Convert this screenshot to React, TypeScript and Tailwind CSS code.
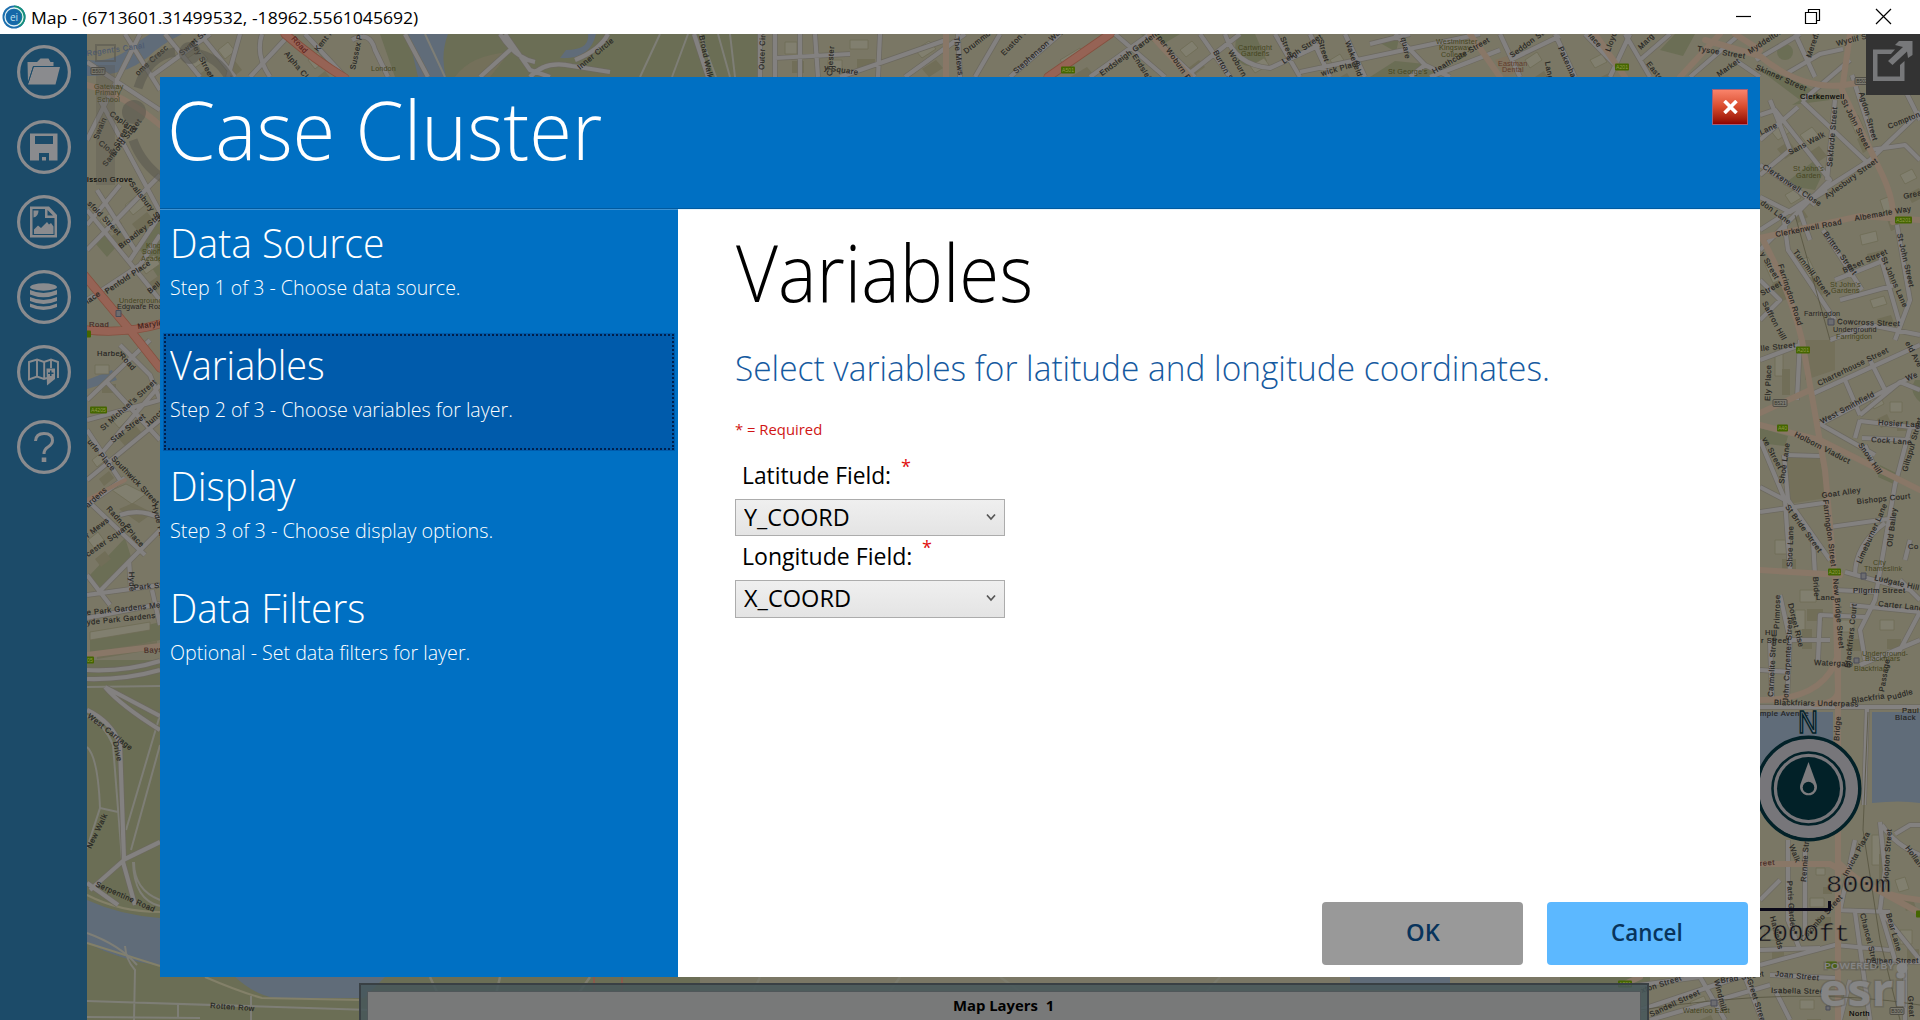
import React, { useLayoutEffect, useRef, useState } from "react";

/* Single line of text condensed or widened to a given width. */
function Fit({ w, className = "", children }: { w: number; className?: string; children: React.ReactNode }) {
  const ref = useRef<HTMLSpanElement>(null);
  const [scale, setScale] = useState(1);
  useLayoutEffect(() => {
    if (ref.current) setScale(w / ref.current.offsetWidth);
  }, [w]);
  return (
    <span
      ref={ref}
      className={"block w-max origin-left whitespace-nowrap " + className}
      style={{ transform: `scaleX(${scale})` }}
    >
      {children}
    </span>
  );
}

type Label = [string, number, number, number, string?];

const streets: Label[] = [
  // west strip
  ["Regent's Canal", 87, 56, -8, "#4d5a70"],
  ["isson Grove", 87, 182, 0, "#000"],
  ["ome Cresc", 138, 76, -42],
  ["Capland", 109, 115, 35],
  ["Street", 118, 148, -62],
  ["Samford Street", 106, 167, -52],
  ["Close", 98, 144, 38],
  ["Swain", 98, 140, -68],
  ["Salisbury Street", 129, 184, 52],
  ["sfold Street", 87, 204, 46],
  ["Broadley Street", 121, 249, -38],
  ["Penfold Place", 107, 294, -34],
  ["lace", 88, 304, -35],
  ["Bell S", 150, 294, -40],
  ["Road", 89, 327, 0, "#472a25"],
  ["Maryleb", 138, 329, -9, "#3c1d18"],
  ["Harbet", 97, 356, 0],
  ["Road", 119, 356, 48],
  ["St Michael's Street", 103, 431, -42],
  ["Star Street", 113, 443, -38],
  ["Juncti", 148, 427, -42],
  ["Southwick Street", 111, 459, 46],
  ["urle Place", 87, 442, 50],
  ["Radnor Place", 106, 509, 48],
  ["Hyde Park", 152, 505, 76],
  ["ardens", 88, 508, -42],
  ["r Mews", 88, 538, -38],
  ["cester Square", 88, 557, -35],
  ["Hyde", 129, 572, 88],
  ["Park St", 134, 590, -5],
  ["e Park Gardens Mews", 87, 615, -6],
  ["yde Park Gardens", 87, 625, -6],
  ["Bays", 144, 653, -3, "#472a25"],
  ["West Carriage", 87, 717, 38],
  ["Drive", 113, 742, 78],
  ["New Walk", 91, 849, -64],
  ["Serpentine Road", 95, 886, 24],
  // north strip
  ["Swart Street", 182, 56, -42],
  ["eley Street", 190, 42, 62],
  ["Alpha Close", 284, 54, 50],
  ["Road", 291, 39, 48, "#5a211a"],
  ["Kent Pas", 318, 52, -52],
  ["Sussex Place", 355, 70, -78],
  ["Inner Circle", 580, 70, -40],
  ["Outer Circle", 764, 70, -88],
  ["Broad Walk", 699, 36, 78],
  ["Chester", 832, 76, -86],
  ["y Square", 824, 70, 8],
  ["The Mews", 954, 37, 84],
  ["Drummond", 966, 54, -38],
  ["Euston Street", 1004, 56, -45],
  ["Stephenson Way", 1016, 74, -42],
  ["Endsleigh Gardens", 1102, 76, -36],
  ["Endsleigh", 1132, 56, 58],
  ["per Woburn Place", 1157, 38, 55],
  ["Burton Street", 1213, 52, 62],
  ["Woburn", 1228, 52, 60],
  ["Leigh Street", 1284, 64, -34],
  ["Street", 1280, 38, 66],
  ["Wakefield Street", 1345, 42, 70],
  ["Street", 1318, 40, 74],
  ["quare", 1401, 38, 78],
  ["wick Place", 1322, 76, -16],
  ["Heathcote Street", 1434, 74, -30],
  ["Seddon Street", 1512, 58, -36],
  ["Pakenham", 1558, 48, 66],
  ["Langton", 1545, 62, 80],
  ["Lloyd", 1610, 52, -70],
  ["lace", 1588, 36, 50],
  ["Marg", 1641, 50, -45],
  ["Easton", 1646, 64, 52],
  ["Tysoe Street", 1697, 51, 9],
  ["Market", 1719, 77, -35],
  ["Myddelton", 1750, 54, -33],
  // east strip
  ["Meredith", 1811, 58, -72],
  ["Wyclif Str", 1837, 46, -14],
  ["Skinner Street", 1755, 69, 24],
  ["Clerkenwell", 1800, 99, 0, "#000"],
  ["St John Street", 1841, 101, 63],
  ["Agdon Street", 1859, 93, 74],
  ["Compton", 1889, 129, -22],
  ["Sekforde Street", 1832, 167, -85],
  ["Lane", 1761, 135, -25],
  ["Sans Walk", 1790, 155, -28],
  ["Clerkenwell Close", 1762, 168, 34],
  ["Aylesbury Street", 1827, 199, -36],
  ["Great", 1904, 199, -12],
  ["Clerkenwell Road", 1776, 237, -11],
  ["Albemarle Way", 1855, 221, -10],
  ["don Lane", 1760, 204, 36],
  ["St John Street", 1897, 234, 77],
  ["Britton Street", 1823, 234, 54],
  ["Turnmill Street", 1793, 252, 53],
  ["Briset Street", 1844, 273, -24],
  ["St Johns Lane", 1881, 258, 66],
  ["Farringdon Road", 1778, 265, 72],
  ["y Street", 1760, 254, 60],
  ["Saffron Hill", 1762, 303, 62],
  ["Street", 1762, 296, -28],
  ["Cowcross Street", 1837, 324, 2],
  ["lle Street", 1761, 351, -6],
  ["Ely Place", 1770, 401, -88],
  ["Charterhouse Street", 1819, 386, -26],
  ["West Smithfield", 1822, 424, -28],
  ["eld Ave", 1905, 343, 62],
  ["We", 1907, 381, -22],
  ["Hosier Lane", 1878, 425, 3],
  ["Cock Lane", 1871, 442, 4],
  ["Snow Hill", 1858, 445, 56],
  ["Giltspur Street", 1907, 472, -74],
  ["Holborn Viaduct", 1794, 436, 27],
  ["ve Street", 1762, 439, 62],
  ["Shoe Lane", 1784, 484, -82],
  ["Goat Alley", 1822, 498, -8],
  ["Bishops Court", 1857, 504, -6],
  ["St Bride Street", 1785, 507, 54],
  ["Farringdon Street", 1823, 500, 83],
  ["Limeburner Lane", 1861, 564, -66],
  ["Old Bailey", 1892, 547, -83],
  ["Shoe Lane", 1792, 567, -88],
  ["Co", 1908, 549, 0],
  ["Ludgate Hill", 1874, 580, 13],
  ["Pilgrim Street", 1853, 593, 0],
  ["Carter Lane", 1878, 606, 6],
  ["New Bridge Street", 1833, 579, 85],
  ["Bride", 1813, 577, 86],
  ["Lane", 1816, 600, 0],
  ["Dorset Rise", 1788, 604, 76],
  ["Primrose", 1779, 629, -88],
  ["Hill", 1765, 635, 0],
  ["r Street", 1761, 643, 0],
  ["Blackfriars Court", 1850, 668, -84],
  ["Watergate", 1814, 665, 2],
  ["Carmelite Street", 1773, 697, -87],
  ["John Carpenter Street", 1788, 702, -87],
  ["Passage", 1884, 692, -80],
  ["Puddle", 1888, 701, -16],
  ["Blackfriars Underpass", 1774, 705, 1],
  ["Blackfria", 1852, 703, -8],
  ["mple Avenue", 1760, 716, 0],
  ["Paul", 1902, 713, 0],
  ["Black", 1895, 720, 0],
  ["Bridge", 1839, 741, -86],
  ["Walk", 1789, 846, 68],
  ["Rennie Street", 1806, 882, -86],
  ["Invicta Plaza", 1847, 877, -62],
  ["reet", 1760, 866, -5, "#472a25"],
  ["Paris Garden", 1787, 881, 86],
  ["Colombo Street", 1803, 942, -48],
  ["Hatfields", 1770, 917, 76],
  ["Chancel Street", 1860, 914, 76],
  ["Bear Lane", 1886, 914, 74],
  ["Hopton Street", 1888, 882, -86],
  ["Hollan", 1905, 848, 54],
  ["Dolben Street", 1866, 964, -1],
  ["Joan Street", 1775, 976, 6],
  ["Isabella Street", 1771, 993, 1],
  ["Brad Street", 1721, 983, -9],
  ["Windmill", 1714, 980, 76],
  ["Greet Street", 1747, 980, 72],
  ["xton Street", 1642, 993, -18],
  ["Sandell Street", 1651, 1017, -25],
  ["North", 1849, 1016, 0, "#000"],
  ["Great", 1908, 996, 86],
  ["Rotten Row", 210, 1008, 4],
];

const places: Label[] = [
  ["Gateway", 94, 89, 0],
  ["Primary", 95, 95, 0],
  ["School", 97, 102, 0],
  ["King", 146, 248, 0],
  ["Solom", 142, 254, 0],
  ["Acade", 141, 261, 0],
  ["Underground", 119, 303, 0],
  ["Edgware Road", 117, 309, 0, "#24231f"],
  ["London", 371, 71, 0],
  ["Cartwright", 1238, 50, 0],
  ["Gardens", 1241, 56, 0],
  ["Westminster", 1436, 44, 0],
  ["Kingsway", 1439, 50, 0],
  ["College", 1441, 57, 0],
  ["St George's", 1388, 74, 0],
  ["Eastman", 1498, 66, 0, "#5f3a2c"],
  ["Dental", 1502, 72, 0, "#5f3a2c"],
  ["St John's", 1793, 171, 0],
  ["Garden", 1796, 178, 0],
  ["St John's", 1830, 287, 0],
  ["Gardens", 1831, 293, 0],
  ["Farringdon", 1804, 316, 0, "#24231f"],
  ["Underground", 1833, 332, 0, "#24231f"],
  ["Farringdon", 1836, 339, 0],
  ["City", 1873, 565, 0],
  ["Thameslink", 1864, 571, 0],
  ["Underground-", 1862, 656, 0],
  ["Blackfriars", 1865, 661, 0],
  ["Blackfriars", 1854, 671, 0],
  ["Waterloo East", 1683, 1013, 0],
];

const whiteRoads = [
  // west
  "M87 62 L160 110 M87 140 L140 34 M125 34 L160 90 M100 100 L175 240 M87 210 L160 300 M87 250 L160 175 M97 190 L135 250 M87 300 L140 265 L160 235 M130 260 L160 215 M120 185 L87 225 M87 400 L150 340 M87 420 L160 400 M120 480 L87 430 M100 455 L160 385 M87 480 L160 420 M105 380 L160 440 M120 345 L150 375 L160 400",
  "M87 500 L145 555 M99 592 L160 530 M87 575 L110 605 M87 595 L160 585 M87 618 L160 604 M129 560 L131 590 M120 515 Q140 508 160 518 M152 590 L160 625 M87 505 L125 478",
  "M87 670 Q125 672 160 661 M87 679 Q125 680 160 670 M105 687 L160 716 M105 687 Q120 705 160 730 M87 710 Q112 722 120 745 L124 860 L90 890 M123 862 L135 905 M123 860 L160 842 M87 883 L118 905",
  // north
  "M165 34 L200 77 M200 34 L235 77 M150 77 L210 34 M228 77 L240 34 M262 34 Q255 55 270 77 M290 34 L250 77 M305 34 L345 77 M352 40 Q370 30 375 50 L388 77 M405 34 L428 77",
  "M505 34 L530 70 L550 77 M480 77 L510 50 M575 60 Q600 50 608 34 M530 77 Q545 60 572 66 L610 72 M500 34 Q515 58 535 62 M694 34 L708 77 M760 34 V77 M775 77 V34 M800 34 V77 M815 34 L818 77 M775 58 L850 54 M840 77 L946 40 M880 34 L878 77 M905 77 L965 34 M958 34 L960 77 M975 77 L1000 34 M1010 77 L1060 34",
  "M1090 77 L1150 34 M1115 34 L1165 77 M1150 34 L1195 77 M1185 77 L1240 34 M1200 34 L1230 77 M1225 34 Q1235 65 1270 68 L1320 45 M1275 34 L1300 77 M1310 34 L1330 77 M1345 34 L1365 77 M1300 72 L1480 34 M1370 44 L1410 34 M1395 34 L1425 65 L1410 77 M1425 65 L1450 77 M1430 77 L1500 50 M1500 34 L1520 77 M1510 60 L1560 36 M1555 34 L1575 77 M1585 34 L1615 65 M1610 77 L1630 34 M1625 34 L1650 77 M1640 60 L1670 34 M1690 77 L1740 34 M1735 60 L1760 77",
  // east
  "M1756 60 L1800 34 M1795 34 L1815 77 M1784 75 L1820 54 L1843 49 M1760 115 L1775 110 L1830 180 L1760 250 M1770 100 L1790 150 L1760 175 M1802 101 L1850 60 M1802 101 L1870 165 M1760 230 L1870 160 L1920 112 M1835 100 L1827 180 M1798 107 L1760 140 M1852 75 L1873 140 M1760 165 Q1800 190 1815 205 M1760 197 L1790 212 L1827 190 M1800 212 L1810 240 M1784 220 L1788 250 L1835 320 M1823 230 L1862 290 M1905 34 L1900 80 L1920 120 M1897 225 L1910 300 L1895 340 M1880 255 L1900 325 M1835 280 L1880 262 M1840 300 L1895 285 M1830 340 L1870 325 L1920 335 M1870 150 L1905 145 L1920 160 M1760 280 L1780 300 L1760 320",
  "M1800 340 L1797 400 M1760 360 L1800 345 M1810 395 L1920 345 M1820 424 L1915 375 M1845 380 L1860 415 M1870 360 L1885 390 M1820 424 L1875 455 M1860 420 L1855 438 M1860 415 L1900 382 L1920 390 M1860 421 L1920 428 M1862 438 L1910 440 M1875 468 L1865 445 M1910 428 L1895 485 L1875 600 L1860 630 L1865 660 M1784 455 L1788 500 L1830 560 M1760 440 L1785 500 L1790 570 M1787 455 L1820 456 M1760 512 L1830 502 M1830 527 L1895 518 M1855 575 Q1855 545 1885 523 M1815 575 L1813 540 M1760 487 L1785 500 M1845 572 L1910 590 M1780 595 L1790 640 L1830 640 M1818 660 L1820 615 L1865 617 M1790 635 L1787 700 M1770 640 L1772 700 M1850 605 L1920 612 L1900 650 L1870 660 M1900 580 L1920 600 M1760 670 L1790 672 M1860 665 L1920 640 M1910 540 L1905 560 M1835 590 L1875 592",
  "M1760 707 H1920 M1867 707 L1864 805 M1880 822 L1885 870 L1880 910 L1920 960 M1895 834 L1910 825 L1920 825 M1882 825 Q1895 845 1920 855 M1788 840 V920 L1800 950 M1805 850 V940 M1760 950 L1820 948 M1760 965 L1835 945 L1890 950 M1760 900 L1780 880 M1840 910 L1855 840 M1835 910 L1890 912 M1855 912 L1870 1020 M1880 910 L1895 960 M1865 962 H1920 M1770 975 L1835 978 M1640 1010 L1760 970 M1650 1020 L1770 985 M1700 977 L1725 1020 M1745 977 L1762 1020 M1775 990 L1790 1020 M1850 980 L1840 1020 M1905 960 V1020 M1640 985 L1700 977",
];

/* Footpaths through the parks, drawn without a casing. */
const paths =
  "M87 687 L160 686 M87 716 Q105 725 113 745 L122 860 M160 745 L131 850 M160 715 L126 830 M134 862 Q134 890 160 900 M100 808 L118 812 M87 747 Q98 757 100 808 L87 848 M133 862 Q134 900 160 906 M87 933 Q120 945 137 965 M125 946 Q126 960 135 970 L134 1020 M87 1001 L370 1010 M87 1017 L200 1018 M251 996 V1020 M178 1003 V1018 M425 34 L445 77 M640 77 L660 34 M672 77 L688 34 M700 34 L716 77 M735 77 L730 34 M718 34 L730 77";

const blocks =
  "M100 220 l12 -8 10 12 -12 8z M125 205 l15 -12 8 10 -15 12z M140 265 l14 -10 6 9 -14 10z M95 365 h14 v9 h-14z M112 420 l16 -14 7 8 -16 14z M92 460 l10 -8 5 7 -10 8z M112 490 l14 -6 20 10 -14 10z M88 540 l10 -8 6 8 -10 8z M90 632 l60 -10 v8 l-60 10z M185 60 l15 -10 8 9 -15 10z M218 50 l10 -8 7 9 -10 8z M308 60 l10 -8 7 9 -10 8z M785 42 h12 v12 h-12z M828 60 h14 v10 h-14z M850 40 h18 v9 h-18z M915 50 l14 -9 7 8 -14 9z M1060 60 l20 -12 6 7 -20 12z M1180 50 l12 -9 6 7 -12 9z M1250 66 l14 -8 5 7 -14 8z M1330 60 l10 -6 5 8 -10 6z M1525 60 l12 -8 5 8 -12 8z M1590 60 l12 -6 5 8 -12 6z M1770 130 l12 -8 8 10 -12 8z M1800 135 l12 -8 8 10 -12 8z M1850 120 l8 -5 6 14 -8 5z M1785 195 l10 -6 6 9 -10 6z M1860 235 l16 -4 2 10 -16 4z M1880 200 l8 -3 4 12 -8 3z M1900 175 l12 -6 5 9 -12 6z M1765 265 l7 -3 8 18 -7 3z M1800 260 l8 -3 9 18 -8 3z M1870 300 l14 -4 3 8 -14 4z M1775 350 h8 v26 h-8z M1870 400 l10 -5 4 9 -10 5z M1890 402 h12 v10 h-12z M1800 590 h16 v12 h-16z M1775 540 h14 v14 h-14z M1840 620 h14 v12 h-14z M1880 620 h14 v10 h-14z M1795 610 h10 v20 h-10z M1816 868 h9 v7 h-9z M1765 930 h12 v10 h-12z M1810 898 h14 v9 h-14z M1872 835 h8 v30 h-8z M1895 880 l10 -3 4 12 -10 3z M1900 930 h12 v14 h-12z M1690 1002 l14 -6 3 7 -14 6z M1800 1000 h14 v9 h-14z";

const shields: [string, number, number, number][] = [
  ["", 84, 334, 7],
  ["A4205", 90, 410, 17],
  ["05", 86, 660, 8],
  ["A501", 1061, 70, 14],
  ["A201", 1615, 67, 14],
  ["A5201", 1895, 220, 17],
  ["A201", 1796, 350, 14],
  ["A40", 1777, 428, 11],
  ["A201", 1828, 572, 13],
  ["A301", 1618, 984, 14],
  ["", 1826, 965, 11],
  ["", 1916, 914, 8],
];

function MapCanvas() {
  return (
    <svg className="absolute inset-0 h-full w-full" viewBox="0 0 1920 1020" fontFamily="Liberation Sans, Arial, sans-serif">
      <rect width="1920" height="1020" fill="#7a7765" />
      {/* parks */}
      <g fill="#6b6e55">
        <path d="M380 34 H760 V77 H395z M87 660 H160 V1020 H87z M87 977 H700 V1020 H87z M90 575 L125 538 L132 560 L98 590z M90 640 L160 622 V640 L90 655z M140 250 L160 215 V280z M95 243 L107 231 L118 245 L107 257z" />
        <path d="M1760 90 V70 L1800 100 L1792 105 L1830 100 L1795 80 L1760 68z M1783 185 L1815 160 L1822 175 L1815 190z M1915 380 h5 v22 q-12 -10 -5 -22z M1880 465 l20 10 -4 10 -18 -8z M1760 428 l28 8 -3 10 -25 -3z M1237 34 q-8 35 20 32 l10 -5 -12 -27z M1370 77 l25 -16 30 3 15 13z M1660 50 l15 -16 h20 l-12 22z M1375 40 l25 -6 -4 18z M1560 977 H1650 V985 H1560z M1140 34 h40 l-20 12z" />
        <circle cx="1785" cy="52" r="8" />
      </g>
      <path fill="#74705a" d="M1785 458 L1820 458 1826 498 1788 504z M1805 340 h30 v30 l-30 10z M455 77 Q470 55 510 52 L490 77z" />
      <path fill="#80735f" d="M1495 60 l18 -6 8 16 -16 7z" />
      {/* water */}
      <path
        fill="#606c79"
        d="M87 60 Q115 63 133 45 L150 34 H182 Q160 45 148 57 Q125 76 87 76z M408 34 H448 Q440 55 446 77 H418z M560 58 Q590 60 596 34 H588 Q590 50 566 50z M87 380 L112 370 L117 380 L87 389z M87 900 Q120 915 160 918 V966 Q120 960 87 943z M235 977 Q255 995 275 998 H364 L385 977z M1350 977 H1450 V990 H1350z M1750 712 H1833 V790 H1750z M1872 712 H1920 V803 Q1900 800 1872 803z"
      />
      <path d="M87 943 Q125 955 160 966 M87 895 Q120 912 160 912 M205 977 Q240 992 262 998 L360 1000" stroke="#838069" strokeWidth="2" fill="none" />
      <path d={blocks} fill="#817f6f" stroke="#6f6c55" strokeWidth=".8" />
      <path d={blocks} transform="translate(7 19)" fill="#716e58" />
      <path d={paths} fill="none" stroke="#7e7e76" strokeWidth="2" />
      {/* minor streets */}
      <g fill="none" strokeLinejoin="round">
        {whiteRoads.map((d, i) => (
          <path key={i} d={d} stroke="#6c695f" strokeWidth="5.6" />
        ))}
        {whiteRoads.map((d, i) => (
          <path key={i} d={d} stroke="#838180" strokeWidth="4.2" />
        ))}
      </g>
      {/* main roads */}
      <g fill="none" strokeLinecap="round">
        <g stroke="#86503f" strokeWidth="9">
          <path d="M285 34 Q315 60 345 78 M1110 34 L1048 77 M84 275 L130 330 L160 368 M87 330 Q125 334 160 324" />
        </g>
        <g stroke="#966355" strokeWidth="7.500">
          <path d="M285 34 Q315 60 345 78 M1110 34 L1048 77 M84 275 L130 330 L160 368 M87 330 Q125 334 160 324" />
        </g>
        <g stroke="#897767" strokeWidth="6">
          <path d="M87 85 Q125 95 160 125 M946 34 V77 M1150 34 L1190 77 M1470 34 L1500 77 M1595 34 L1625 77 M1720 34 L1680 77 M1705 40 L1760 56 Q1800 90 1845 85 L1920 72 M1760 50 L1735 34 M1850 34 L1842 90 L1880 170 Q1895 200 1893 222 M1760 238 L1860 216 L1920 220 M1762 238 Q1790 290 1802 340 L1825 470 L1835 580 L1838 690 M1760 413 L1810 390 M1760 425 L1820 440 L1920 490 M1760 570 L1840 575 M1838 640 V690 Q1838 704 1815 704 M1838 690 V1020 M1760 864 H1830 L1920 913 M1760 700 Q1825 700 1838 655 M1600 1000 Q1620 985 1640 977 M1840 864 Q1870 895 1920 900 M87 655 L160 646" />
        </g>
        <path d="M87 500 L125 480" stroke="#8a7464" strokeWidth="4" />
      </g>
      <path d="M1868 712 L1863 830 L1880 940 L1900 1020 M1640 1010 Q1800 985 1920 1005 M1795 215 L1830 340" stroke="#55533f" strokeWidth=".8" fill="none" />
      <path d="M430 977 L450 1020 M500 977 L490 1020 M560 1020 L590 977 M760 977 L740 1020 M1000 977 L1060 1020 M1180 1020 L1220 977 M900 977 L870 1020" stroke="#7e7d6e" strokeWidth="2.5" />
      <path d="M594 977 V988 Q594 995 608 995 T622 988 V977" stroke="#8a5a4c" strokeWidth="2" fill="none" />

      {places.map(([t, x, y, , c], i) => (
        <text key={i} x={x} y={y} fontSize="7.200" letterSpacing=".15" fill={c || "#45451f"}>
          {t}
        </text>
      ))}
      {streets.map(([t, x, y, r, c], i) => (
        <text key={i} transform={`translate(${x} ${y}) rotate(${r})`} fontSize="7.600" letterSpacing=".5" fill={c || "#24231f"} stroke={c || "#24231f"} strokeWidth=".15">
          {t}
        </text>
      ))}
      {shields.map(([t, x, y, w], i) => (
        <g key={i}>
          <rect x={x} y={y - 3.5} width={w} height="7" rx="1" fill="#456600" />
          <text x={x + w / 2} y={y + 2} fontSize="5.200" textAnchor="middle" fill="#8f9a4a">
            {t}
          </text>
        </g>
      ))}
      {[
        ["B507", 91, 71],
        ["B521", 1773, 403],
        ["B502", 1855, 81],
        ["B300", 1890, 1011],
      ].map(([t, x, y], i) => (
        <g key={i}>
          <rect x={Number(x)} y={Number(y) - 3.5} width="14" height="7" rx="1" fill="#7c7a70" stroke="#44433c" strokeWidth=".8" />
          <text x={Number(x) + 7} y={Number(y) + 2} fontSize="5" textAnchor="middle" fill="#33322c">
            {t}
          </text>
        </g>
      ))}
      <path fill="#6d6d70" stroke="#4a4d58" d="M116 310.500h5v6h-5z M1828 319h6v6h-6z M1861 573h5v6h-5z M1854 658h5v5h-5z M1711 1000h6v6h-6z M1826 1006h4v4h-4z" />

      {/* faded navigation control */}
      <g fill="none" stroke="#55544c" opacity=".5">
        <path d="M138 88 Q148 56 175 52 M200 54 Q222 60 232 84 M133 140 Q142 165 165 180" strokeWidth="9" />
        <path d="M96 45h19v16H96z" strokeWidth="2" />
        <path d="M96 65h19v120H96z" fill="#55544c" stroke="none" opacity=".5" />
        <circle cx="190" cy="53" r="11" fill="#55544c" stroke="none" />
        <circle cx="134" cy="112" r="12" fill="#55544c" stroke="none" />
      </g>

      {/* compass */}
      <g fill="none">
        <circle cx="1808.500" cy="788.500" r="51" stroke="#022128" strokeWidth="4" />
        <circle cx="1808.500" cy="788.500" r="43" stroke="#77767a" strokeWidth="13" />
        <circle cx="1808.500" cy="788.500" r="36" fill="#77767a" stroke="#022128" strokeWidth="2.600" />
        <circle cx="1808.500" cy="788.500" r="31.500" fill="#022128" />
        <path d="M1808.500 762 L1816.500 784 A8.500 8.500 0 1 1 1800.500 784z" fill="#7d7c7e" />
        <circle cx="1808.500" cy="787.500" r="5.800" fill="#022128" />
      </g>
      <text x="1798" y="733" fontSize="32" textLength="20" lengthAdjust="spacingAndGlyphs" fill="#707782" stroke="#022128" strokeWidth="1.500">
        N
      </text>
      {/* scale bar */}
      <path d="M1750 909.500 H1829.500 V901" fill="none" stroke="#0a0818" strokeWidth="3" />
      <g fontFamily="Liberation Mono, monospace" fontSize="24" fill="#12111c" stroke="#77745f" strokeWidth=".5">
        <text x="1826" y="892" textLength="65" lengthAdjust="spacingAndGlyphs">
          800m
        </text>
        <text x="1757" y="941" textLength="93" lengthAdjust="spacingAndGlyphs">
          2000ft
        </text>
      </g>
      {/* attribution logo */}
      <g fill="#858585" fontFamily="Open Sans, sans-serif" stroke="#55544e" strokeOpacity=".35" paintOrder="stroke" strokeWidth="3">
        <text x="1824" y="969" fontSize="9.500" fontWeight="600" textLength="70" lengthAdjust="spacingAndGlyphs">
          POWERED BY
        </text>
        <text x="1819" y="1006" fontSize="44" fontWeight="700" textLength="89" lengthAdjust="spacingAndGlyphs">
          esri
        </text>
      </g>
      <circle cx="1902" cy="968" r="5.500" fill="#858585" />
    </svg>
  );
}

const toolIcons: React.ReactNode[] = [
  <g key="open">
    <path d="M-16.500 -10 h9.500 l3.500 -3.500 h8 l2 3.500 h3 v4 H-11 L-16 11 z" />
    <path d="M-10.500 -5 H16 L11.500 12.500 H-16 z" />
    <path d="M-16 11 L-10.500 -5.500 H12" fill="none" stroke="#1c4b69" strokeWidth="1" />
  </g>,
  <path key="save" fillRule="evenodd" d="M-14 -13.500 H13.500 V13.500 H-14z M-9 -11 V-3 H9 V-11z M-5 13.500 H5 V6 H-5z M-2 13.500 V10 H2 V13.500z" />,
  <g key="image">
    <path fillRule="evenodd" d="M-14 -15.500 H5 L13 -7 V15.500 H-14z M-11.500 -13 V13 H10.500 V-4 H1 V-13z M3.500 -12 V-6.500 H9z" />
    <path d="M-10.500 -11.500 h5 q0 6 -5 7z M-10 12 V7.500 L-6 3.500 L-3 6 L3 0 L5 2.500 L7 1 L9.500 4.500 V12z" />
  </g>,
  <g key="data">
    <ellipse cx="-.5" cy="-10" rx="13.500" ry="3.700" />
    <path d="M-14 -7 Q-.5 -1 13 -7 V-2.500 Q-.5 3 -14 -2.500z M-14 0 Q-.5 6 13 0 V4 Q-.5 10 -14 4z M-14 6.500 Q-.5 12.500 13 6.500 V10 Q-.5 16 -14 10z" />
  </g>,
  <g key="map">
    <path d="M3 6 L0 7 L-7 4.500 L-15 7.500 V-10 L-7 -12.500 L0 -10 L7 -12.500 L14 -10 V6 M-7 -12 V4.500 M.2 -9.500 V7 M7 -12 V-4" fill="none" stroke="#8a8b8e" strokeWidth="1.900" />
    <path fillRule="evenodd" d="M2.500 -3.500 H11 V7 L3 13.500z M6 -1.500 V0.500 H4 V2 H6 V4 H7.500 V2 H9.500 V.5 H7.500 V-1.500z" />
  </g>,
  <g key="help">
    <path d="M-8.500 -6 Q-8 -13.500 0 -13.500 Q8.500 -13.500 8.500 -6.500 Q8.500 -3 4 0 Q0 2.500 0 7" fill="none" stroke="#8a8b8e" strokeWidth="3" />
    <path d="M-2.300 10.500 h4.600 v4.500 h-4.600z" />
  </g>,
];

function TitleBar() {
  return (
    <div className="relative flex h-[34px] items-center bg-white text-black">
      <svg className="ml-[2px] h-6 w-6" viewBox="0 0 24 24">
        <circle cx="12" cy="12" r="11.500" fill="#1c6fae" />
        <path d="M12 .5 A11.500 11.500 0 0 1 18 21.800 L15.500 18 A7.500 7.500 0 0 0 12 4z" fill="#17917a" />
        <circle cx="12" cy="12" r="9" fill="none" stroke="#e4f2f6" strokeWidth="1.300" />
        <circle cx="12" cy="12" r="7.400" fill="#1668a8" />
        <text x="12" y="15.500" fontSize="10" textAnchor="middle" fill="#bfe0ee" fontFamily="Open Sans, sans-serif">
          ei
        </text>
      </svg>
      <div className="ml-[5px] pt-px text-[16px] leading-6">
        <Fit w={387}>Map - (6713601.31499532, -18962.5561045692)</Fit>
      </div>
      <svg className="ml-auto h-[34px] w-[200px]" viewBox="1720 0 200 34" fill="none" stroke="#000" strokeWidth="1.200">
        <path d="M1736 16.500 H1751" />
        <path d="M1805.500 12.500 h11 v11 h-11z M1808.500 12.500 v-3 h11 v11 h-3" />
        <path d="M1876 9 L1891 24 M1891 9 L1876 24" />
      </svg>
    </div>
  );
}

const steps = [
  { title: "Data Source", tw: 213, text: "Step 1 of 3 - Choose data source.", w: 291 },
  { title: "Variables", tw: 154, text: "Step 2 of 3 - Choose variables for layer.", w: 343, active: true },
  { title: "Display", tw: 125, text: "Step 3 of 3 - Choose display options.", w: 323 },
  { title: "Data Filters", tw: 194, text: "Optional - Set data filters for layer.", w: 300 },
];

function Field({ label, lw, value, vw, tall }: { label: string; lw: number; value: string; vw: number; tall?: boolean }) {
  return (
    <div className="w-[270px]">
      <div className="flex h-8 items-start pl-[7px]">
        <div className="text-[24px] leading-8" style={{ width: lw + 10 }}>
          <Fit w={lw}>{label}</Fit>
        </div>
        <span className="-mt-[5px] text-[18px] leading-6 text-[#e01010]">*</span>
      </div>
      <div
        className={
          "mt-2 flex items-center justify-between border border-[#acacac] bg-gradient-to-b from-[#efefef] to-[#e4e4e4] pr-2 pl-2 " +
          (tall ? "h-[38px]" : "h-[37px]")
        }
      >
        <div className="-mt-[2px] text-[24px] leading-8">
          <Fit w={vw}>{value}</Fit>
        </div>
        <svg className="-mt-[2px] h-[8px] w-[10px]" viewBox="0 0 10 8" fill="none" stroke="#555" strokeWidth="1.700">
          <path d="M1 1.500 L5 6 L9 1.500" />
        </svg>
      </div>
    </div>
  );
}

export default function App() {
  return (
    <div className="relative flex h-[1020px] w-[1920px] flex-col overflow-hidden font-['Open_Sans',sans-serif]">
      <MapCanvas />

      {/* map layers drawer */}
      <div className="absolute bottom-0 left-[359px] h-[37px] w-[1290px] border-2 border-b-0 border-[#394044] bg-[#46575a]/85 px-[6px] pt-[6px]">
        <div className="flex h-full items-center justify-center border border-b-0 border-[#50575a] bg-[#787979] text-[15px] font-bold text-black">
          <span className="-mt-[2px]">
            <Fit w={101}>Map Layers&nbsp; 1</Fit>
          </span>
        </div>
      </div>

      <TitleBar />

      <div className="relative flex flex-1">
        <aside className="flex w-[87px] flex-col items-center gap-[21px] bg-[#1c4b69] pt-[11px]">
          {toolIcons.map((icon, i) => (
            <svg key={i} className="h-[54px] w-[54px] shrink-0" viewBox="-27 -27 54 54" fill="#8a8b8e">
              <circle r="25.400" fill="none" stroke="#8a8b8e" strokeWidth="3.200" />
              {icon}
            </svg>
          ))}
        </aside>

        <section className="mt-[43px] ml-[73px] flex h-[900px] w-[1600px] flex-col">
          <header className="flex h-[132px] shrink-0 items-start justify-between border-b border-[#005a9f] bg-[#0070c3] pr-3 pl-[7px]">
            <h1 className="text-[82px] leading-[102px] font-light text-white">
              <Fit w={435}>Case Cluster</Fit>
            </h1>
            <button className="mt-3 flex h-[36px] w-[36px] items-center justify-center border border-[#a0607a] bg-gradient-to-b from-[#f9836a] via-[#d84a2c] to-[#900000]">
              <svg className="h-[14px] w-[15px]" viewBox="0 0 15 14" stroke="#fff" strokeWidth="3.600">
                <path d="M1.500 1 L13.500 13 M13.500 1 L1.500 13" />
              </svg>
            </button>
          </header>

          <div className="flex flex-1">
            <nav className="flex w-[518px] flex-col gap-[3.5px] border-t border-[#3d92d2] bg-[#0070c3] px-[3px] pt-px">
              {steps.map((s) => (
                <div
                  key={s.title}
                  className={
                    "h-[118px] shrink-0 pt-px pl-[7px] text-white " +
                    (s.active ? "bg-[#005bab] outline-2 -outline-offset-3 outline-dotted outline-[#00204d]" : "")
                  }
                >
                  <div className="-mt-px text-[41px] leading-[63px] font-light">
                    <Fit w={s.tw + 1}>{s.title}</Fit>
                  </div>
                  <div className="text-[20px] leading-[27px] font-light">
                    <Fit w={s.w}>{s.text}</Fit>
                  </div>
                </div>
              ))}
            </nav>

            <main className="flex flex-1 flex-col border-t border-[#e6f4fb] bg-white pt-6 pr-3 pl-[57px] text-black">
              <h2 className="pl-px text-[80px] leading-[74px] font-light">
                <Fit w={297}>Variables</Fit>
              </h2>
              <p className="mt-[34px] text-[35px] leading-[51px] font-light text-[#165a9f]">
                <Fit w={815}>Select variables for latitude and longitude coordinates.</Fit>
              </p>
              <p className="mt-6 mb-[18px] text-[15px] leading-6 text-[#d01515]">
                <Fit w={87}>* = Required</Fit>
              </p>
              <Field label="Latitude Field:" lw={149} value="Y_COORD" vw={106} />
              <div className="h-1" />
              <Field label="Longitude Field:" lw={170} value="X_COORD" vw={107} tall />
              <div className="mt-auto mb-3 flex justify-end gap-6 text-[23px] font-semibold text-[#08345c]">
                <button className="flex h-[63px] w-[201px] items-center justify-center rounded bg-[#999] pb-[2px]">
                  <Fit w={34}>OK</Fit>
                </button>
                <button className="flex h-[63px] w-[201px] items-center justify-center rounded bg-[#5cb8ff] pb-[2px]">
                  <Fit w={72}>Cancel</Fit>
                </button>
              </div>
            </main>
          </div>
        </section>

        <button className="absolute top-0 right-0 h-[61px] w-[54px] bg-[#333]">
          <svg className="h-[61px] w-[54px]" viewBox="0 0 54 61" fill="#77787a">
            <path fillRule="evenodd" d="M7 15.500 H29 L25 20 H11.500 V42.500 H34 V31 L38.500 27 V47 H7z" />
            <path d="M22 27 L37 13 L29 11 L33 7 H46.500 V21 L42 24 L41 17.500 L26.500 31z" />
          </svg>
        </button>
      </div>
    </div>
  );
}
